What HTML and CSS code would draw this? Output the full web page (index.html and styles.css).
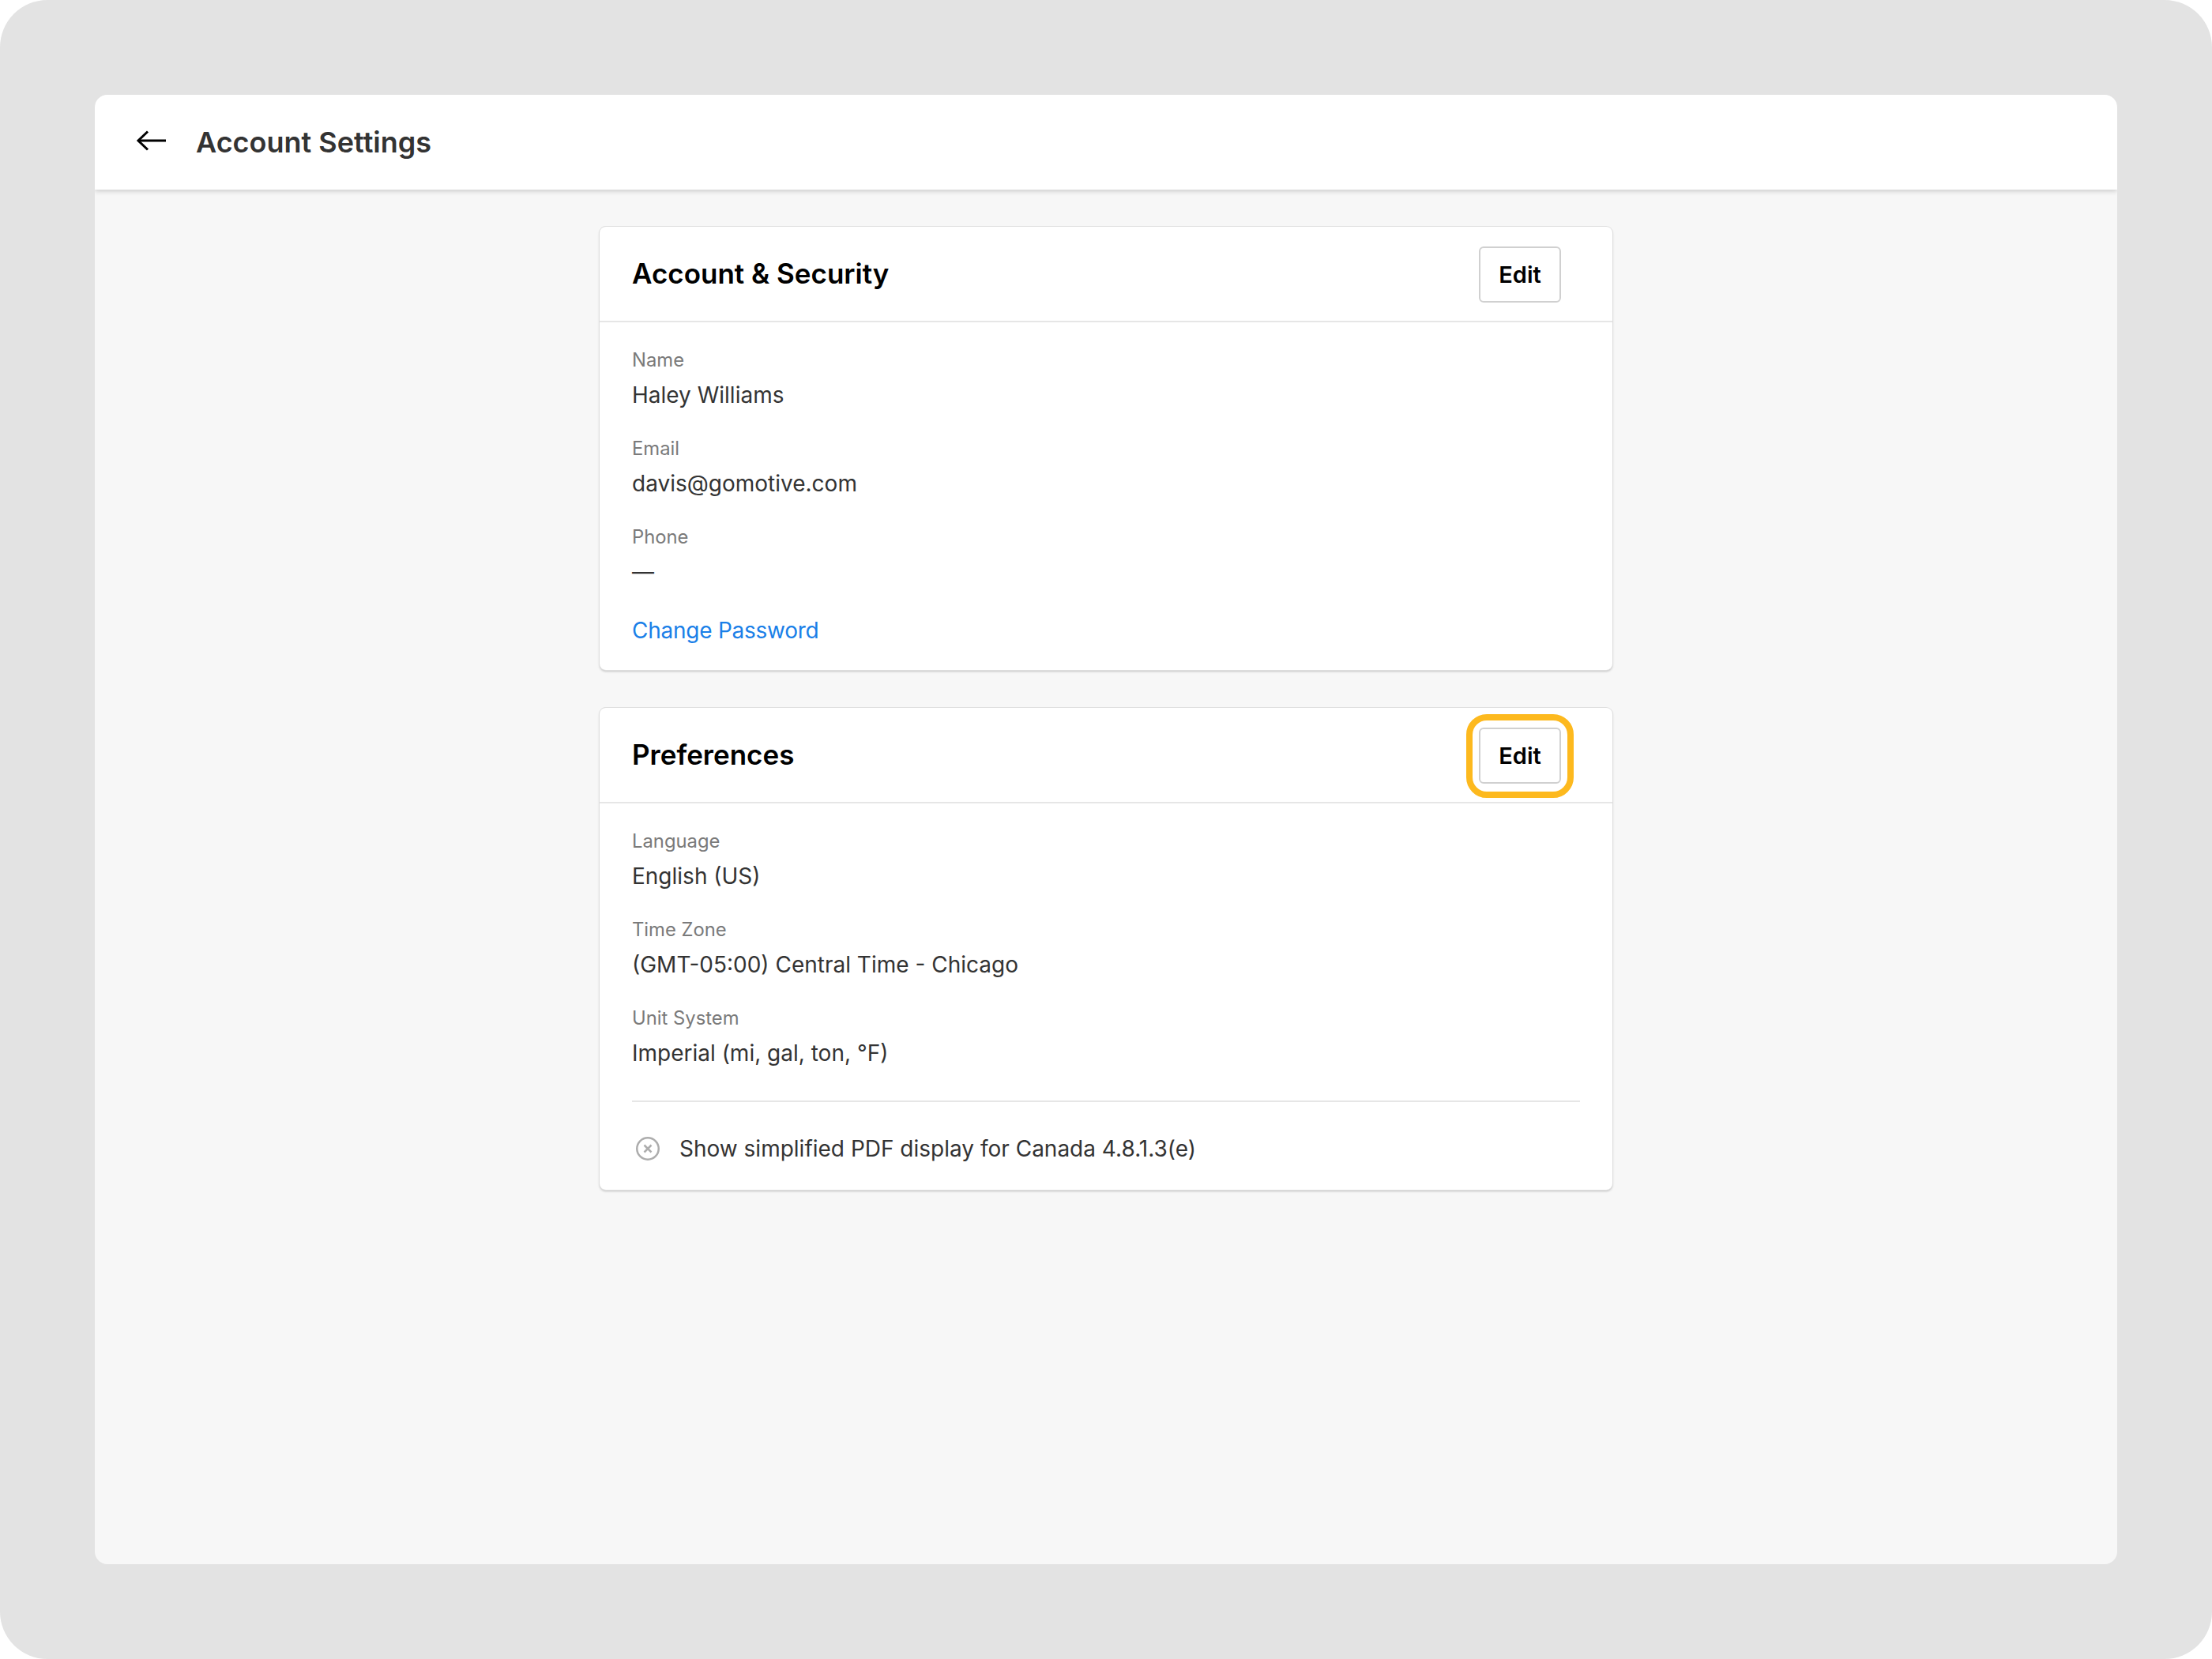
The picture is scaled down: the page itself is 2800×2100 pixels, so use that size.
FILE: index.html
```html
<!DOCTYPE html>
<html lang="en">
<head>
    <meta charset="UTF-8">
    <title>Account Settings</title>
    <link rel="stylesheet" href="styles.css">
</head>
<body>
    <div class="backdrop">
        <div class="window">
            <header class="topbar">
                <svg class="back-icon" viewBox="0 0 38 26" width="38" height="26" fill="none" stroke="#000" stroke-width="3">
                    <path d="M38 13H3"/>
                    <path d="M15 1.500L3 13L15 24.500"/>
                </svg>
                <h1>Account Settings</h1>
            </header>
            <main class="content">
                <section class="card">
                    <div class="card-head">
                        <h2>Account &amp; Security</h2>
                        <button class="edit-btn">Edit</button>
                    </div>
                    <div class="card-body">
                        <div class="field">
                            <div class="label">Name</div>
                            <div class="value">Haley Williams</div>
                        </div>
                        <div class="field">
                            <div class="label">Email</div>
                            <div class="value">davis@gomotive.com</div>
                        </div>
                        <div class="field">
                            <div class="label">Phone</div>
                            <div class="value">—</div>
                        </div>
                        <a class="link" href="#">Change Password</a>
                    </div>
                </section>
                <section class="card">
                    <div class="card-head">
                        <h2>Preferences</h2>
                        <button class="edit-btn highlighted">Edit</button>
                    </div>
                    <div class="card-body">
                        <div class="field">
                            <div class="label">Language</div>
                            <div class="value">English (US)</div>
                        </div>
                        <div class="field">
                            <div class="label">Time Zone</div>
                            <div class="value">(GMT-05:00) Central Time - Chicago</div>
                        </div>
                        <div class="field">
                            <div class="label">Unit System</div>
                            <div class="value">Imperial (mi, gal, ton, °F)</div>
                        </div>
                        <div class="option">
                            <svg viewBox="0 0 30 30" width="30" height="30" fill="none" stroke="#adadad" stroke-width="2.500">
                                <circle cx="15" cy="15" r="13.750"/>
                                <path d="M10.500 10.500L19.500 19.500M19.500 10.500L10.500 19.500"/>
                            </svg>
                            <span class="value">Show simplified PDF display for Canada 4.8.1.3(e)</span>
                        </div>
                    </div>
                </section>
            </main>
        </div>
    </div>
</body>
</html>
```

FILE: styles.css
```css
* {
    box-sizing: border-box;
}
body {
    margin: 0;
    background-color: #fff;
    font-family: Inter, "Liberation Sans", sans-serif;
}
.backdrop {
    height: 2100px;
    padding: 120px;
    background-color: #e3e3e3;
    border-radius: 60px;
}
.window {
    height: 1860px;
    background-color: #f7f7f7;
    border-radius: 16px;
    overflow: hidden;
}
.topbar {
    display: flex;
    align-items: center;
    gap: 38px;
    height: 120px;
    padding: 0 52px;
    background-color: #fff;
    box-shadow: 0 2px 6px rgba(0,0,0,0.18);
}
.back-icon {
    margin-top: -4px;
}
.topbar h1 {
    margin: 0;
    font-size: 36px;
    font-weight: 600;
    color: #333;
}
.content {
    display: flex;
    flex-direction: column;
    align-items: center;
    gap: 48px;
    padding-top: 47px;
}
.card {
    width: 1282px;
    background-color: #fff;
    border-radius: 8px;
    box-shadow: 0 0 0 1px #dedede, 0 2px 3px rgba(0,0,0,0.22);
}
.card-head {
    display: flex;
    justify-content: space-between;
    align-items: center;
    height: 121px;
    padding: 0 65px 0 41px;
    border-bottom: 2px solid #e6e6e6;
}
.card-head h2 {
    margin: 0 0 2px;
    font-size: 35px;
    font-weight: 600;
    color: #000;
}
.edit-btn {
    position: relative;
    width: 104px;
    height: 71px;
    margin-top: 2px;
    background-color: #fff;
    border: 2px solid #d0d0d0;
    border-radius: 6px;
    font-family: inherit;
    font-size: 29px;
    font-weight: 600;
    color: #000;
}
.highlighted::after {
    content: "";
    position: absolute;
    left: -18px;
    right: -18px;
    top: -19px;
    bottom: -20px;
    border: 8px solid #fdb91e;
    border-radius: 26px;
}
.card-body {
    padding: 32px 41px 28px;
}
.field {
    margin-bottom: 30px;
}
.label {
    font-size: 23.800px;
    line-height: 32px;
    color: #7a7a7a;
}
.value {
    margin-top: 6px;
    font-size: 28px;
    line-height: 44px;
    color: #333;
}
.link {
    display: block;
    font-size: 28px;
    line-height: 44px;
    letter-spacing: -0.25px;
    color: #1a7fe8;
    text-decoration: none;
}
.option {
    display: flex;
    align-items: center;
    gap: 25px;
    margin-top: 38px;
    margin-bottom: 2px;
    padding: 37px 5px 0;
    border-top: 2px solid #e6e6e6;
}
.option .value {
    margin-top: 0;
}
```
